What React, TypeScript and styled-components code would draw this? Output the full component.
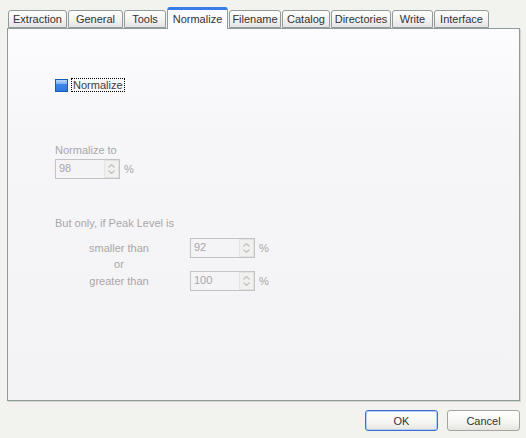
import React from "react";
import styled, { createGlobalStyle } from "styled-components";

const GlobalStyle = createGlobalStyle`
  html, body {
    margin: 0;
    padding: 0;
    background: #f2f2ee;
  }
  body {
    font-family: "Liberation Sans", Arial, sans-serif;
    font-size: 11px;
  }
`;

const tabs = [
  { name: "Extraction", width: 59 },
  { name: "General", width: 55 },
  { name: "Tools", width: 42 },
  { name: "Normalize", width: 61, active: true },
  { name: "Filename", width: 52 },
  { name: "Catalog", width: 48 },
  { name: "Directories", width: 60 },
  { name: "Write", width: 41 },
  { name: "Interface", width: 55 },
];

const Dialog = styled.div`
  width: 526px;
  height: 438px;
  box-sizing: border-box;
  padding: 7px 6px 0 7px;
  background: #f2f2ee;
`;

const TabStrip = styled.div`
  display: flex;
  align-items: flex-end;
  height: 21px;
  padding-left: 1px;
  gap: 1px;
  position: relative;
  z-index: 1;
`;

const Tab = styled.div<{ $w: number; $active?: boolean }>`
  width: ${(p) => p.$w}px;
  height: ${(p) => (p.$active ? 22 : 18)}px;
  margin-bottom: ${(p) => (p.$active ? -1 : 0)}px;
  box-sizing: border-box;
  border: 1px solid #919b9c;
  border-bottom: ${(p) => (p.$active ? "none" : "1px solid #919b9c")};
  border-top: ${(p) => (p.$active ? "3px solid #3a7ce9" : "1px solid #919b9c")};
  border-radius: 3px 3px 0 0;
  background: ${(p) =>
    p.$active
      ? "#fcfcfe"
      : "linear-gradient(#fefefe 0%, #f4f4f1 50%, #e4e4e8 100%)"};
  color: #333333;
  display: flex;
  justify-content: center;
  align-items: center;
  padding-top: ${(p) => (p.$active ? 0 : 1)}px;
  line-height: 13px;
`;

const Panel = styled.div`
  height: 373px;
  box-sizing: border-box;
  border: 1px solid #919b9c;
  box-shadow: 1px 1px 0 #d6d5cf;
  background: linear-gradient(#fcfcfe 0%, #f6f5f8 30%, #f3f2f5 100%);
  padding: 49px 0 0 47px;
`;

const CheckRow = styled.div`
  display: flex;
  align-items: center;
  gap: 3px;
  height: 14px;
`;

const CheckBox = styled.span`
  width: 13px;
  height: 13px;
  box-sizing: border-box;
  border: 1px solid #1c5ab0;
  background: linear-gradient(#b8d6fb 0%, #7fb0f3 35%, #3d86ea 36%, #2d78e2 100%);
`;

const FocusLabel = styled.span`
  border: 1px dotted #000;
  padding: 0 1px;
  line-height: 12px;
  color: #3c3c3c;
`;

const Muted = styled.div<{ $top: number }>`
  color: #a8a8a8;
  line-height: 13px;
  margin-top: ${(p) => p.$top}px;
`;

const SpinRow = styled.div<{ $top?: number }>`
  display: flex;
  align-items: center;
  gap: 4px;
  margin-top: ${(p) => p.$top ?? 0}px;
  color: #a8a8a8;
`;

const SpinBox = styled.div`
  width: 65px;
  height: 20px;
  box-sizing: border-box;
  border: 1px solid #c3c3c3;
  display: flex;
  background: #f4f3f6;
`;

const SpinValue = styled.div`
  flex: 1;
  color: #a8a8a8;
  padding-left: 3px;
  line-height: 17px;
`;

const SpinButtons = styled.div`
  width: 15px;
  box-sizing: border-box;
  border: 1px solid #e3e3e3;
  background: #f1f1ef;
  display: flex;
  flex-direction: column;
  align-items: center;
  justify-content: center;
  gap: 2px;
`;

const PeakGrid = styled.div`
  display: grid;
  grid-template-columns: 128px 65px auto;
  grid-template-rows: 20px 13px 20px;
  column-gap: 7px;
  align-items: center;
  margin-top: 8px;
  color: #a8a8a8;
`;

const Centered = styled.div`
  text-align: center;
  line-height: 13px;
`;

const Percent = styled.span`
  margin-left: -3px;
`;

const Footer = styled.div`
  display: flex;
  justify-content: flex-end;
  gap: 9px;
  margin-top: 9px;
`;

const Button = styled.button<{ $default?: boolean }>`
  width: 73px;
  height: 21px;
  box-sizing: border-box;
  font-family: "Liberation Sans", Arial, sans-serif;
  font-size: 11px;
  color: #333;
  border-radius: 3px;
  border: 1px solid ${(p) => (p.$default ? "#3c6fd1" : "#a4a4a0")};
  box-shadow: ${(p) => (p.$default ? "inset 0 0 0 1px #b3cdf4" : "none")};
  background: linear-gradient(#ffffff 0%, #f5f5f2 60%, #e6e5df 100%);
  padding: 0;
`;

const Arrow = ({ up }: { up?: boolean }) => (
  <svg width="7" height="4" viewBox="0 0 7 4">
    <path
      d={up ? "M0.5 3.5 L3.5 0.5 L6.5 3.5" : "M0.5 0.5 L3.5 3.5 L6.5 0.5"}
      fill="none"
      stroke="#c2c2c2"
      strokeWidth="1.3"
    />
  </svg>
);

const Spin = ({ value }: { value: string }) => (
  <SpinBox>
    <SpinValue>{value}</SpinValue>
    <SpinButtons>
      <Arrow up />
      <Arrow />
    </SpinButtons>
  </SpinBox>
);

export default function App() {
  return (
    <Dialog>
      <GlobalStyle />
      <TabStrip>
        {tabs.map((t) => (
          <Tab key={t.name} $w={t.width} $active={t.active}>
            {t.name}
          </Tab>
        ))}
      </TabStrip>
      <Panel>
        <CheckRow>
          <CheckBox />
          <FocusLabel>Normalize</FocusLabel>
        </CheckRow>
        <Muted $top={52}>Normalize to</Muted>
        <SpinRow $top={2}>
          <Spin value="98" />
          <span>%</span>
        </SpinRow>
        <Muted $top={38}>But only, if Peak Level is</Muted>
        <PeakGrid>
          <Centered>smaller than</Centered>
          <Spin value="92" />
          <Percent>%</Percent>
          <Centered>or</Centered>
          <div />
          <div />
          <Centered>greater than</Centered>
          <Spin value="100" />
          <Percent>%</Percent>
        </PeakGrid>
      </Panel>
      <Footer>
        <Button $default>OK</Button>
        <Button>Cancel</Button>
      </Footer>
    </Dialog>
  );
}
